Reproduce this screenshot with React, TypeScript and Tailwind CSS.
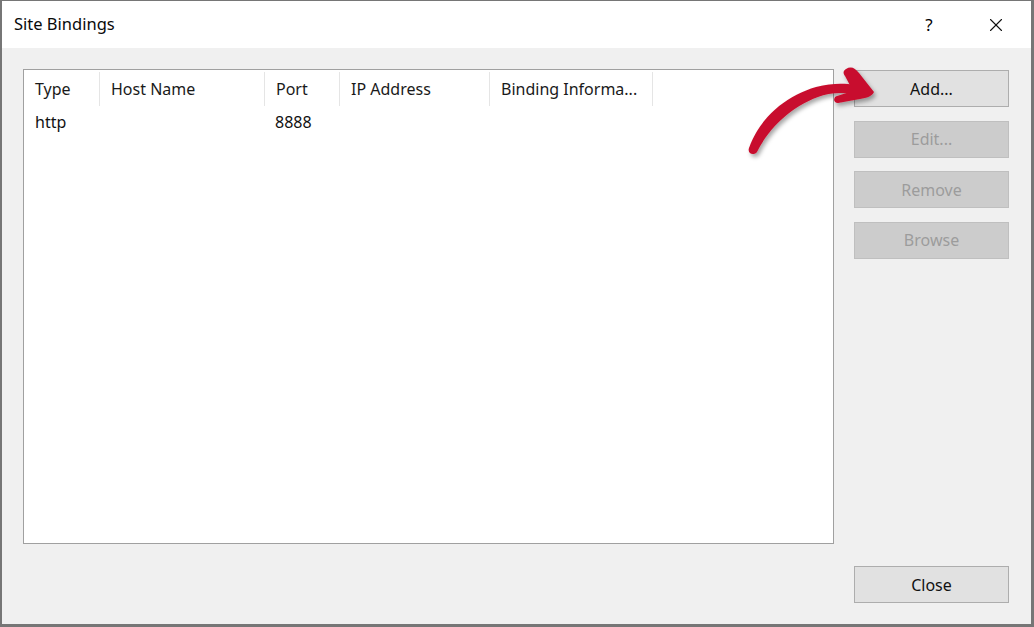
import { X } from 'lucide-react';

const columns = [
  { label: 'Type', width: 'w-[76px]' },
  { label: 'Host Name', width: 'w-[165px]' },
  { label: 'Port', width: 'w-[75px]' },
  { label: 'IP Address', width: 'w-[150px]' },
  { label: 'Binding Informa...', width: 'w-[163px]' },
];

const sideButtons = [
  { label: 'Add...', enabled: true },
  { label: 'Edit...', enabled: false },
  { label: 'Remove', enabled: false },
  { label: 'Browse', enabled: false },
];

function DialogButton({ label, enabled = true }: { label: string; enabled?: boolean }) {
  return (
    <button
      className={`h-[37px] w-[155px] border flex items-center justify-center text-[16px] ${
        enabled
          ? 'bg-[#e1e1e1] border-[#adadad] text-[#111]'
          : 'bg-[#cccccc] border-[#bfbfbf] text-[#9c9c9c]'
      }`}
    >
      {label}
    </button>
  );
}

export default function App() {
  return (
    <div
      className="relative w-[1034px] h-[627px] bg-white border-l-2 border-t border-r-[3px] border-b-[3px] border-[#767676] flex flex-col overflow-hidden"
      style={{ fontFamily: '"Noto Sans", "Open Sans", Arial, sans-serif' }}
    >
      {/* title bar */}
      <div className="h-[47px] shrink-0 bg-white flex items-center pl-[12px] text-[#000]">
        <span className="text-[16.5px] pb-[1px] text-[#0a0a0a]">Site Bindings</span>
        <div className="ml-auto flex items-center">
          <span className="text-[17px] w-[20px] text-center mr-[46px]">?</span>
          <X size={22} strokeWidth={1.2} className="mr-[24px] text-[#111]" />
        </div>
      </div>

      {/* body */}
      <div className="flex-1 bg-[#f0f0f0] flex pl-[21px] pt-[21px] pb-[21px] pr-[22px] gap-[20px]">
        {/* list view */}
        <div className="w-[811px] h-[475px] bg-white border border-[#a0a0a0] pt-[2px]">
          <div className="flex h-[34px] text-[16px] text-[#1a1a1a]">
            {columns.map((c) => (
              <div key={c.label} className={`${c.width} border-r border-[#e5e5e5] flex items-center pl-[11px] whitespace-nowrap`}>
                {c.label}
              </div>
            ))}
          </div>
          <div className="flex h-[32px] text-[16px] text-[#111] items-center">
            <div className="w-[76px] pl-[11px]">http</div>
            <div className="w-[165px]" />
            <div className="w-[75px] pl-[10px]">8888</div>
          </div>
        </div>

        {/* buttons */}
        <div className="flex flex-col pt-[1px]">
          <div className="flex flex-col gap-[13.5px]">
            {sideButtons.map((b) => (
              <DialogButton key={b.label} label={b.label} enabled={b.enabled} />
            ))}
          </div>
          <div className="mt-auto">
            <DialogButton label="Close" />
          </div>
        </div>
      </div>

      {/* annotation arrow */}
      <svg className="absolute left-0 top-0 pointer-events-none" width="1034" height="627" viewBox="0 0 1034 627">
        <defs>
          <filter id="sh" x="-20%" y="-20%" width="140%" height="140%">
            <feDropShadow dx="2" dy="3" stdDeviation="2" floodColor="#000" floodOpacity="0.35" />
          </filter>
        </defs>
        <g filter="url(#sh)" fill="#c8102e">
          <path d="M747 147 C 758 116, 784 95, 814 86 C 830 82, 842 82, 853 84 L 852 93 C 838 91, 826 92, 816 96 C 791 105, 768 125, 755 151 C 752 155, 745 153, 747 147 Z" />
          <path d="M844 68 C 849 65, 853 67, 857 72 L 872 91 C 870 95, 865 97, 858 98 L 836 102 C 831 102, 831 96, 835 95 L 851 90 L 843 75 C 841 72, 841 70, 844 68 Z" />
        </g>
      </svg>
    </div>
  );
}
